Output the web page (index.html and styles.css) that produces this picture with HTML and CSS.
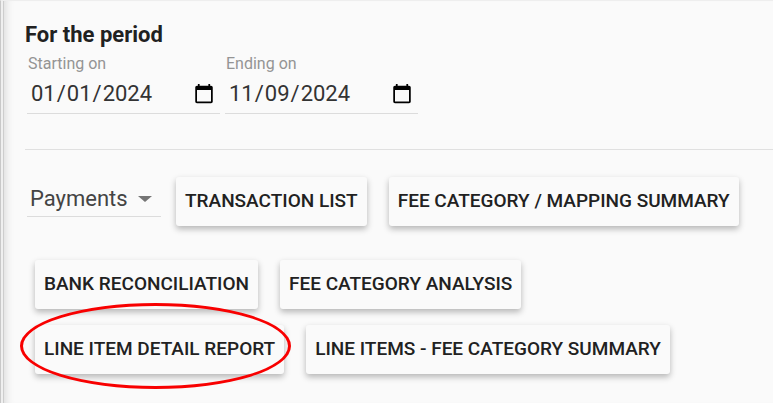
FILE: index.html
```html
<!DOCTYPE html>
<html lang="en">
<head>
    <meta charset="UTF-8">
    <meta name="viewport" content="width=device-width, initial-scale=1.0">
    <title>Reports</title>
    <link rel="stylesheet" href="styles.css">
</head>
<body>
    <main class="report-panel">
        <h2 class="panel-title">For the period</h2>

        <div class="period">
            <div class="field">
                <label class="field-label" for="startDate">Starting on</label>
                <input class="field-date" type="date" id="startDate" value="2024-01-01">
            </div>
            <div class="field">
                <label class="field-label" for="endDate">Ending on</label>
                <input class="field-date" type="date" id="endDate" value="2024-11-09">
            </div>
        </div>

        <div class="report-row">
            <div class="select-wrap">
                <select class="type-select" aria-label="Report type">
                    <option>Payments</option>
                </select>
            </div>
            <button class="report-button" type="button">Transaction List</button>
            <button class="report-button" type="button">Fee Category / Mapping Summary</button>
        </div>

        <div class="report-group">
            <div class="report-row">
                <button class="report-button" type="button">Bank Reconciliation</button>
                <button class="report-button" type="button">Fee Category Analysis</button>
            </div>
            <div class="report-row">
                <div class="highlight">
                    <button class="report-button" type="button">Line Item Detail Report</button>
                </div>
                <button class="report-button" type="button">Line Items - Fee Category Summary</button>
            </div>
        </div>
    </main>
</body>
</html>
```

FILE: styles.css
```css
* {
    box-sizing: border-box;
}
body {
    margin: 0;
    background: #fafafa;
    color: #212121;
    font-family: Roboto, Arial, sans-serif;
}
.report-panel {
    min-height: 100vh;
    padding: 20px 0 0 24px;
    border-top: 1px solid #eeeeee;
    border-left: 1px solid #c8c8c8;
    box-shadow: inset 2px 0 0 #efefef, inset 3px 0 0 #cdcdcd, inset 12px 0 10px -8px rgba(0,0,0,0.15);
}
.panel-title {
    margin: 0;
    font-size: 22px;
    line-height: 28px;
    font-weight: 700;
}
.period {
    display: flex;
    gap: 5px;
    padding: 5px 0 35px 2px;
    border-bottom: 1px solid #e0e0e0;
}
.field {
    width: 193px;
    border-bottom: 1px solid #dcdcdc;
}
.field-label {
    display: block;
    padding-left: 1px;
    font-size: 16px;
    line-height: 20px;
    color: #949494;
}
.field-date {
    display: block;
    width: 100%;
    height: 39px;
    padding: 0 3px;
    border: 0;
    background: transparent;
    color: #333;
    font-family: inherit;
    font-size: 22px;
}
.report-row {
    display: flex;
    gap: 22px;
}
.period + .report-row {
    padding-top: 27px;
}
.select-wrap {
    position: relative;
    align-self: flex-start;
    width: 134px;
    margin: 0 -7px 0 2px;
    border-bottom: 1px solid #dcdcdc;
}
.select-wrap::after {
    content: "";
    position: absolute;
    right: 9px;
    top: 19px;
    border: 7px solid transparent;
    border-top: 6px solid #757575;
    border-bottom: 0;
    pointer-events: none;
}
.type-select {
    display: block;
    width: 100%;
    height: 39px;
    padding: 4px 0 0 3px;
    border: 0;
    background: transparent;
    color: #444;
    font-family: inherit;
    font-size: 22px;
    appearance: none;
}
.report-button {
    height: 49px;
    padding: 0 9px 2px;
    border: 0;
    border-radius: 3px;
    background: #fafafa;
    box-shadow: 0 3px 6px rgba(0,0,0,0.28);
    color: #212121;
    font-family: inherit;
    font-size: 19px;
    font-weight: 500;
    text-transform: uppercase;
    white-space: nowrap;
    cursor: pointer;
}
.report-group {
    display: flex;
    flex-direction: column;
    gap: 16px;
    padding: 34px 0 0 10px;
}
.highlight {
    position: relative;
}
/* red ring around the report to pick */
.highlight::after {
    content: "";
    position: absolute;
    inset: -22px -7px -15px -15px;
    border: 3px solid #f80000;
    border-radius: 50%;
    pointer-events: none;
}
```
